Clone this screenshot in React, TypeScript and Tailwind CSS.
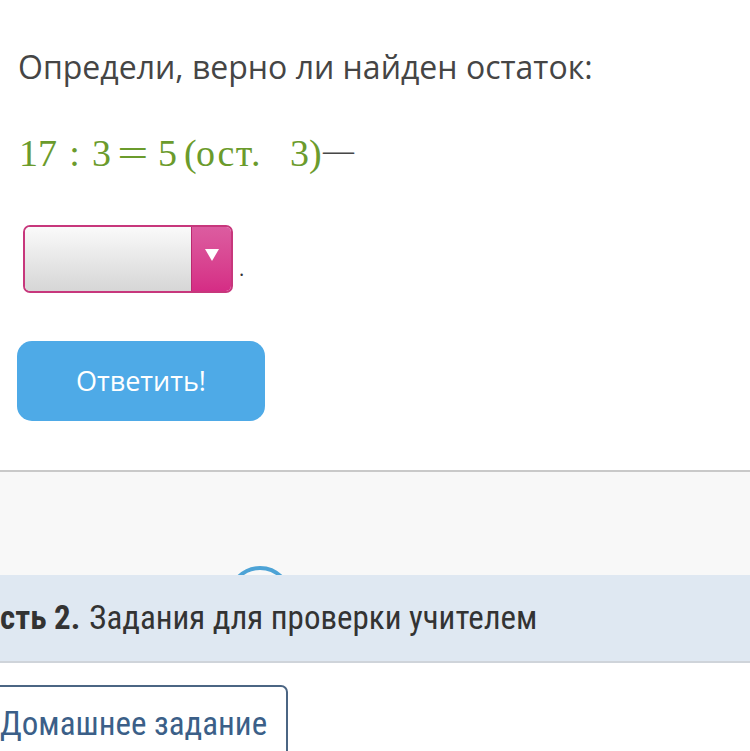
import React from "react";

const narrow = '"Liberation Sans Narrow", "Roboto Condensed", "DejaVu Sans Condensed", sans-serif';

export default function App() {
  return (
    <div className="w-[750px] h-[751px] overflow-hidden bg-white relative" style={{ fontFamily: '"Open Sans", sans-serif' }}>
      <div className="pl-[18px] pt-[45px]">
        <div className="text-[32px] leading-[44px] text-[#454545]" style={{ fontFamily: '"Open Sans", sans-serif' }}>
          Определи, верно ли найден остаток:
        </div>
        <div className="mt-[42px] flex text-[38px] leading-[44px] text-[#6b9b2c] whitespace-nowrap" style={{ fontFamily: '"Liberation Serif", serif' }}>
          <span className="block w-[42px] shrink-0 pl-[1px]">17</span>
          <span className="block w-[29px] shrink-0 text-center">:</span>
          <span className="block w-[25px] shrink-0 text-center">3</span>
          <span className="block w-[37px] shrink-0 text-center"><span className="inline-block scale-x-[1.45]">=</span></span>
          <span className="block w-[33px] shrink-0 text-center">5</span>
          <span className="block w-[12px] shrink-0">(</span>
          <span className="block w-[94px] shrink-0 tracking-[1.5px]">ост.</span>
          <span className="block w-[19px] shrink-0">3</span>
          <span className="block w-[10px] shrink-0">)</span>
          <span className="block w-[39px] shrink-0 text-center text-[31px] relative -top-[2px] text-[#474747]">—</span>
        </div>
        <div className="mt-[50px] ml-[5px] flex items-end">
          <div className="w-[210px] h-[68px] rounded-[7px] border-2 border-[#c7377c] flex overflow-hidden">
            <div className="flex-1 bg-gradient-to-b from-[#fafafa] to-[#d6d6d6]" />
            <div className="w-[40px] bg-gradient-to-b from-[#dc5ca0] to-[#d52c85] border-l border-[#b92a70] flex items-center justify-center">
              <svg width="14" height="12" viewBox="0 0 14 12" className="-mt-[8px]">
                <polygon points="0,0 14,0 7,12" fill="#ffffff" />
              </svg>
            </div>
          </div>
          <span className="ml-[6px] mb-[14px] text-[20px] leading-none text-[#333]">.</span>
        </div>
        <div className="mt-[48px] -ml-[1px] w-[248px] h-[80px] rounded-[15px] bg-[#4eaae7] flex items-center justify-center text-white text-[27px]">
          Ответить!
        </div>
      </div>
      <div className="mt-[49px] border-t-2 border-[#c9c9c9] bg-[#f8f8f8] h-[105px] relative">
        <div className="absolute left-[228px] top-[94px] w-[64px] h-[64px] rounded-full border-[4px] border-[#4da3d6]" />
      </div>
      <div className="relative bg-[#dfe8f2] h-[88px] border-b-2 border-[#cfd4da] flex items-center text-[33px] text-[#333]" style={{ fontFamily: narrow }}>
        <span className="font-bold">сть 2.</span>
        <span className="ml-[9px]">Задания для проверки учителем</span>
      </div>
      <div className="pt-[22px] bg-white">
        <div className="-ml-[10px] w-[298px] h-[80px] border-2 border-[#4b6583] rounded-[7px] pl-[8px] pt-[17px] text-[33px] leading-[40px] text-[#3b5f88]" style={{ fontFamily: narrow }}>
          Домашнее задание
        </div>
      </div>
    </div>
  );
}
